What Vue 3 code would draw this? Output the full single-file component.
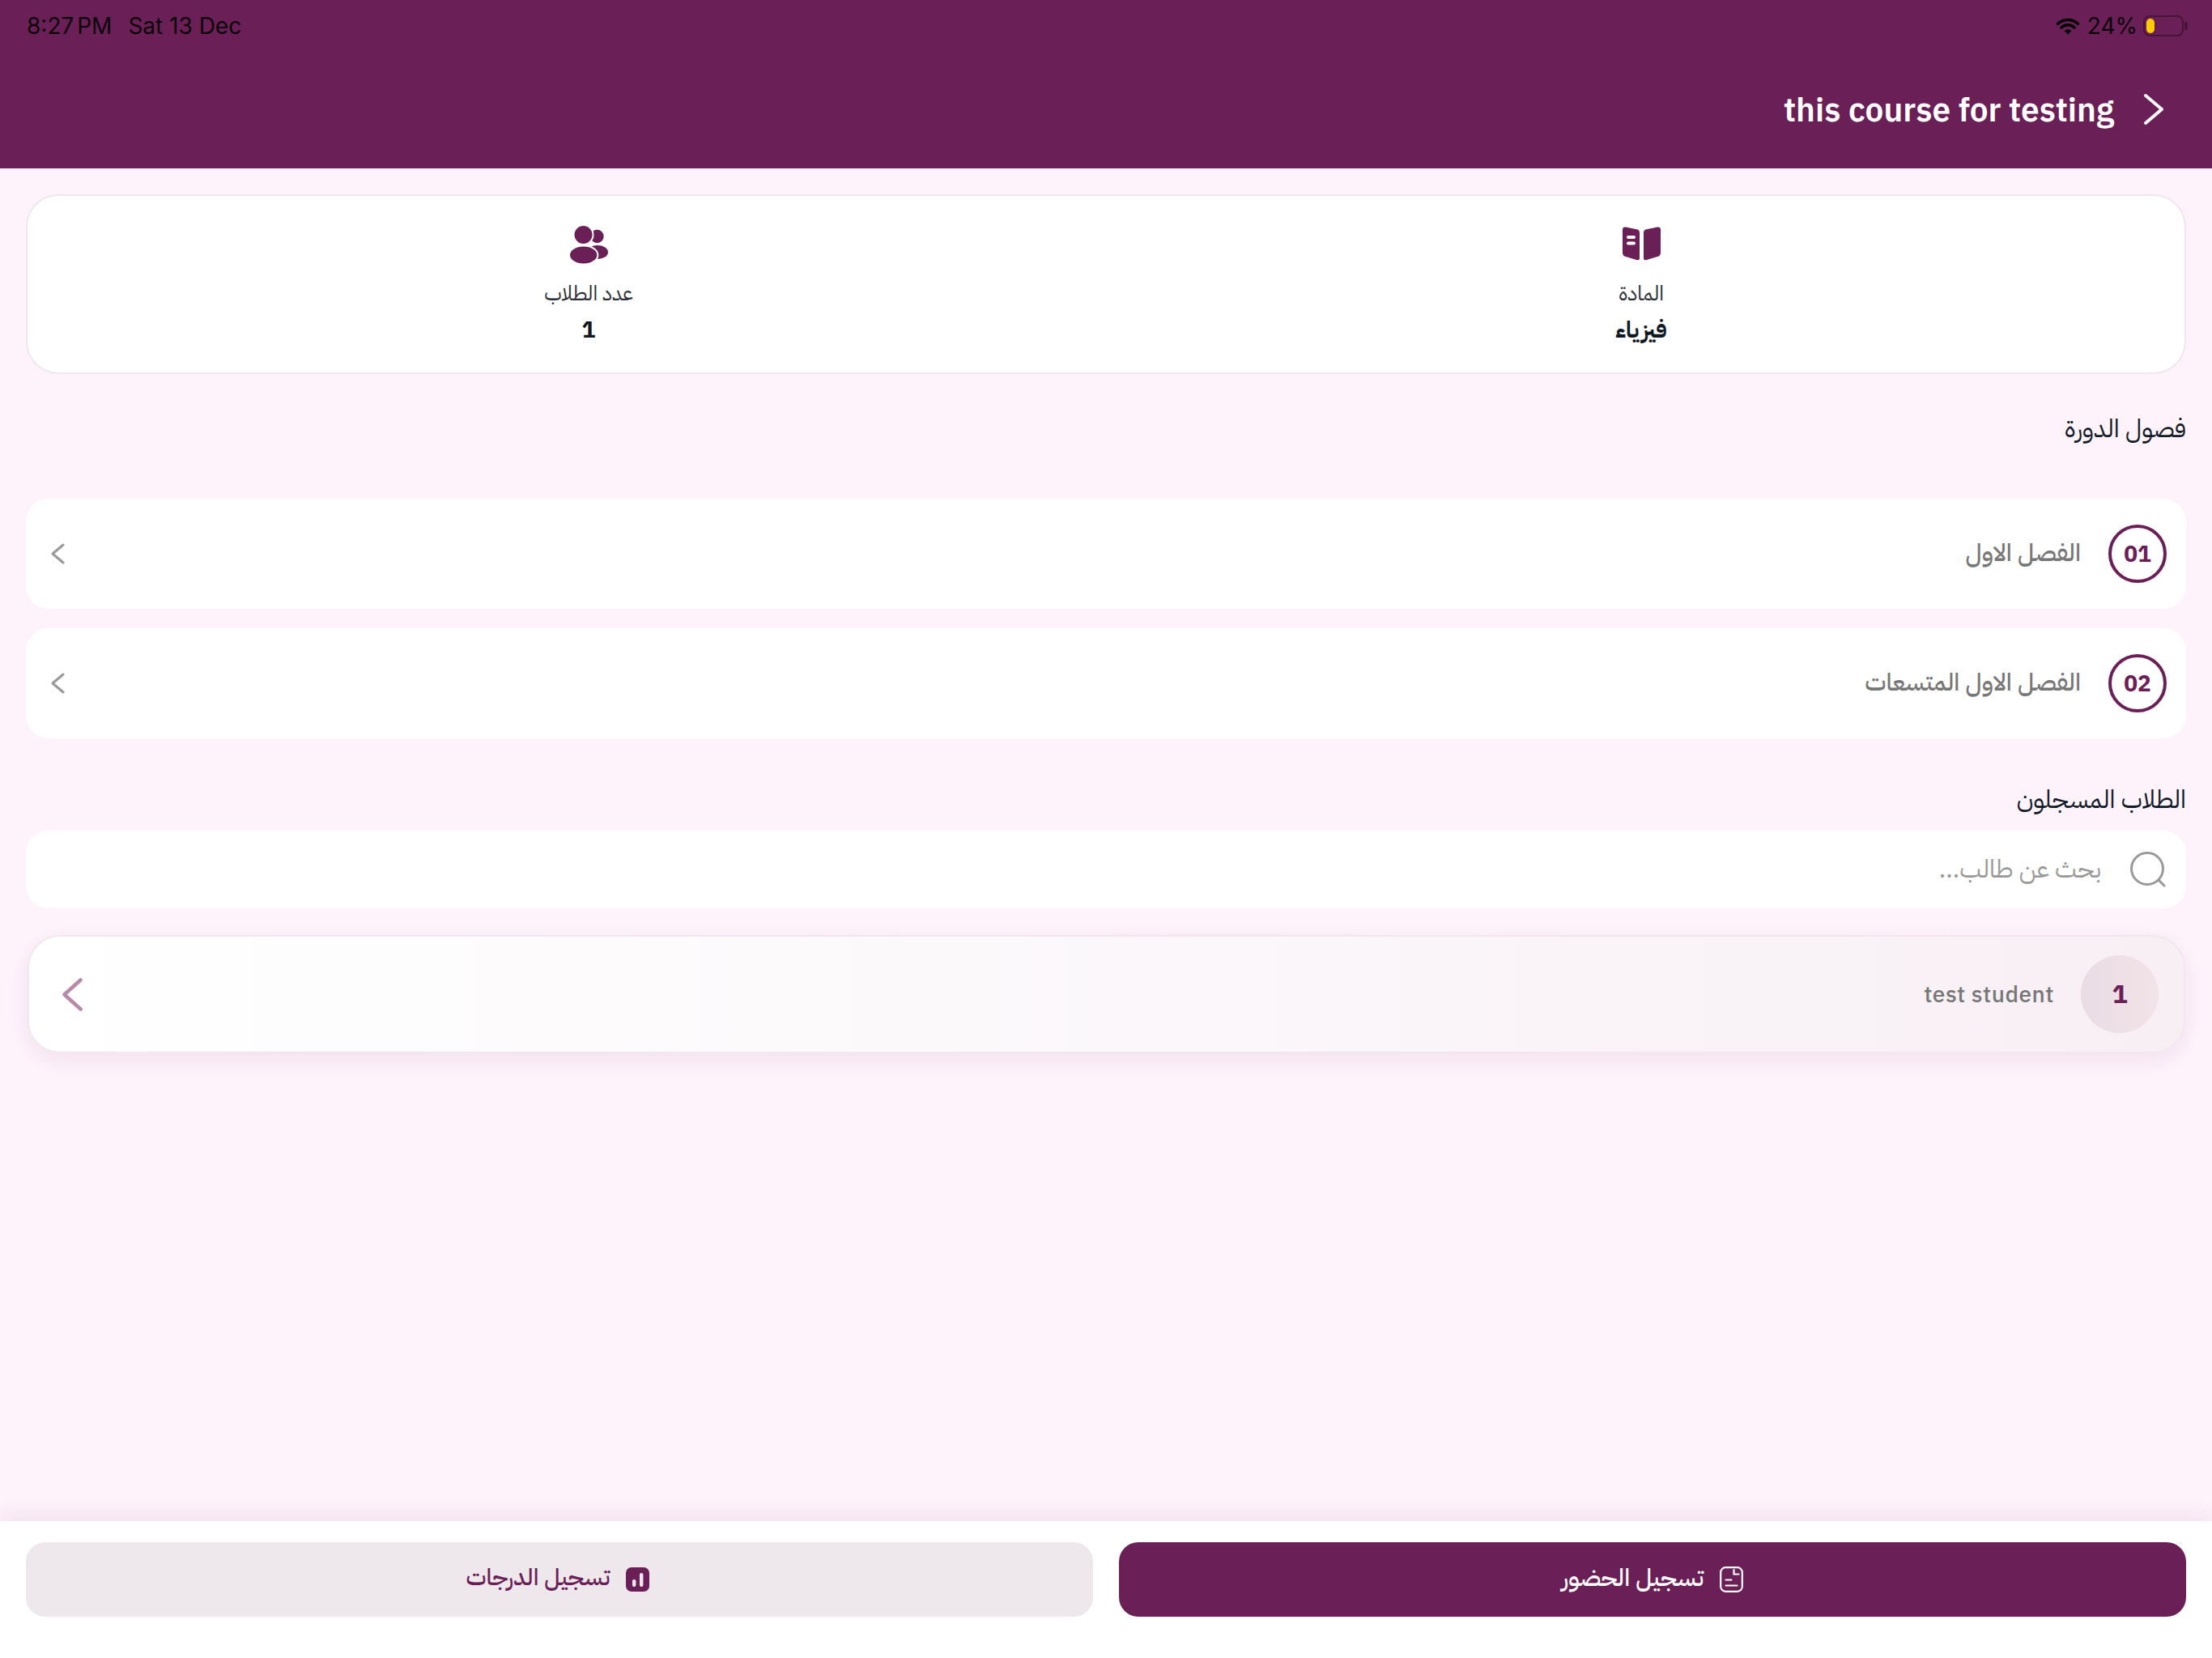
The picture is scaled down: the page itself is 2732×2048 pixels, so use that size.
<template>
  <div class="page">
    <header class="top">
      <div class="status" dir="ltr">
        <span class="time">8:27 PM</span>
        <span class="date">Sat 13 Dec</span>
        <span class="status-right">
          <svg class="wifi" width="28" height="21" viewBox="0 0 28 21">
            <path d="M1.5 7.5 A18 18 0 0 1 26.5 7.5" fill="none" stroke="#000" stroke-width="3.4" stroke-linecap="round" />
            <path d="M6 12 A11.5 11.5 0 0 1 22 12" fill="none" stroke="#000" stroke-width="3.4" stroke-linecap="round" />
            <path d="M14 20.5 L9.6 16 A6.2 6.2 0 0 1 18.4 16 Z" fill="#000" />
          </svg>
          <span>24%</span>
          <span class="battery"><span class="battery-fill"></span></span>
        </span>
      </div>
      <div class="title-row">
        <svg class="back" width="26" height="40" viewBox="0 0 26 40">
          <path d="M3 3 L23 20 L3 37" fill="none" stroke="#fff" stroke-width="4" stroke-linecap="round" stroke-linejoin="round" />
        </svg>
        <span class="title" dir="ltr">this course for testing</span>
      </div>
    </header>

    <main class="content">
      <section class="stats">
        <div class="stat">
          <svg width="47" height="47" viewBox="0 0 47 47" preserveAspectRatio="xMidYMin">
            <g transform="translate(0 1)">
              <path d="M4 .6 L18.5 3.6 Q21 4.2 21 7 V39 Q21 42 18 41.2 L4 37 Q0 35.8 0 32 V4 Q0 0 4 .6 Z" fill="#6a2056" />
              <path d="M43 .6 L28.5 3.6 Q26 4.2 26 7 V39 Q26 42 29 41.2 L43 37 Q47 35.8 47 32 V4 Q47 0 43 .6 Z" fill="#6a2056" />
              <rect x="5" y="11" width="11" height="4" rx="2" fill="#fff" />
              <rect x="5" y="18.5" width="11" height="4" rx="2" fill="#fff" />
            </g>
          </svg>
          <span class="stat-label">المادة</span>
          <span class="stat-value">فيزياء</span>
        </div>
        <div class="stat">
          <svg width="47" height="47" viewBox="0 0 47 47">
            <circle cx="33.5" cy="13" r="8.2" fill="#6a2056" />
            <ellipse cx="34" cy="32.5" rx="13" ry="8.5" fill="#6a2056" />
            <circle cx="16.5" cy="11" r="12" fill="#6a2056" stroke="#fff" stroke-width="2" />
            <ellipse cx="16.7" cy="36" rx="17.7" ry="11.5" fill="#6a2056" stroke="#fff" stroke-width="2" />
          </svg>
          <span class="stat-label">عدد الطلاب</span>
          <span class="stat-value">1</span>
        </div>
      </section>

      <h2 class="section-title first">فصول الدورة</h2>
      <div class="chapters">
        <div v-for="chapter in chapters" :key="chapter.num" class="chapter">
          <span class="chapter-num">{{ chapter.num }}</span>
          <span class="chapter-name">{{ chapter.name }}</span>
          <svg class="chapter-arrow" width="17" height="26" viewBox="0 0 17 26">
            <path d="M15 2 L2 13 L15 24" fill="none" stroke="#999" stroke-width="3" stroke-linecap="round" stroke-linejoin="round" />
          </svg>
        </div>
      </div>

      <h2 class="section-title second">الطلاب المسجلون</h2>
      <div class="search">
        <svg width="44" height="44" viewBox="0 0 44 44">
          <circle cx="21" cy="21" r="19.5" fill="none" stroke="#999" stroke-width="3" />
          <path d="M36 36 L42 42" fill="none" stroke="#999" stroke-width="3" stroke-linecap="round" />
        </svg>
        <input class="search-input" type="text" placeholder="بحث عن طالب..." />
      </div>

      <div class="student">
        <span class="avatar">1</span>
        <span class="student-name" dir="ltr">test student</span>
        <svg class="student-arrow" width="25" height="41" viewBox="0 0 25 41">
          <path d="M22.5 2.5 L2.5 20.5 L22.5 38.5" fill="none" stroke="#b88aaa" stroke-width="4.5" stroke-linecap="round" stroke-linejoin="round" />
        </svg>
      </div>
    </main>

    <footer class="bottom">
      <button class="action primary">
        <svg width="29" height="32" viewBox="0 0 29 32">
          <rect x="1.2" y="1.2" width="26.6" height="29.6" rx="6" fill="none" stroke="#fff" stroke-width="2.2" />
          <path d="M17.5 4 V9.5 H23.5 M7.5 16.5 H14.5 M7.5 23.5 H21.5" fill="none" stroke="#fff" stroke-width="2.2" stroke-linecap="round" />
        </svg>
        <span class="action-text">تسجيل الحضور</span>
      </button>
      <button class="action secondary">
        <svg width="29" height="30" viewBox="0 0 29 30">
          <rect width="29" height="30" rx="7" fill="#6a2056" />
          <rect x="8" y="15" width="4.4" height="9" rx="2" fill="#eee8ec" />
          <rect x="17" y="7" width="4.4" height="17" rx="2" fill="#eee8ec" />
        </svg>
        <span class="action-text">تسجيل الدرجات</span>
      </button>
    </footer>
  </div>
</template>

<script setup>
const chapters = [
  { num: '01', name: 'الفصل الاول' },
  { num: '02', name: 'الفصل الاول المتسعات' },
]
</script>

<style>
html,
body {
  margin: 0;
  background: #fef2fb;
}
</style>

<style scoped>
.page {
  direction: rtl;
  width: 2732px;
  min-height: 2048px;
  display: flex;
  flex-direction: column;
  background: #fef2fb;
  font-family: "IBM Plex Sans Arabic", "Noto Sans", "DejaVu Sans", sans-serif;
}

.top {
  height: 208px;
  box-sizing: border-box;
  background: #6a2056;
  display: flex;
  flex-direction: column;
}

.status {
  display: flex;
  align-items: center;
  height: 64px;
  padding: 0 35px 0 33px;
  font-family: Inter, "Liberation Sans", sans-serif;
  font-size: 28px;
  color: #0a0208;
}

.time {
  word-spacing: -4px;
}

.date {
  margin-left: 20px;
}

.status-right {
  margin-left: auto;
  display: flex;
  align-items: center;
  gap: 10px;
}

.battery {
  position: relative;
  width: 50px;
  height: 26px;
  margin-left: -3px;
  box-sizing: border-box;
  border: 2px solid rgba(0, 0, 0, 0.35);
  border-radius: 8px;
  padding: 2px;
  display: flex;
  justify-content: flex-start;
}

.battery::after {
  content: "";
  position: absolute;
  right: -7px;
  top: 6px;
  width: 4px;
  height: 10px;
  border-radius: 0 3px 3px 0;
  background: rgba(0, 0, 0, 0.35);
}

.battery-fill {
  width: 10px;
  height: 18px;
  border-radius: 5px;
  background: #ffcc00;
}

.title-row {
  display: flex;
  align-items: center;
  gap: 36px;
  padding: 44px 59px 0 0;
}

.title {
  font-family: "IBM Plex Sans", Roboto, sans-serif;
  font-size: 40.6px;
  font-weight: 600;
  color: #fff;
}

.content {
  flex: 1;
  padding: 32px;
  display: flex;
  flex-direction: column;
}

.stats {
  height: 222px;
  box-sizing: border-box;
  background: #fff;
  border: 2px solid #f0e7ee;
  border-radius: 40px;
  display: grid;
  grid-template-columns: 1300px 1300px;
  justify-content: center;
  padding: 37px 21px 0 43px;
}

.stat {
  display: flex;
  flex-direction: column;
  align-items: center;
}

.stat-label {
  margin-top: 20px;
  font-size: 25.5px;
  line-height: 34px;
  color: #2b2f38;
}

.stat-value {
  margin-top: 8px;
  font-size: 28px;
  line-height: 40px;
  font-weight: 700;
  color: #101822;
}

.section-title {
  margin: 0;
  font-size: 31px;
  line-height: 44px;
  font-weight: 400;
  color: #111a26;
}

.section-title.first {
  margin-top: 46px;
  margin-bottom: 64px;
}

.section-title.second {
  margin-top: 54px;
  margin-bottom: 16px;
}

.chapters {
  display: flex;
  flex-direction: column;
  gap: 24px;
}

.chapter {
  height: 136px;
  box-sizing: border-box;
  background: #fff;
  border-radius: 28px;
  display: flex;
  align-items: center;
  padding: 0 24px;
}

.chapter-num {
  width: 72px;
  height: 72px;
  box-sizing: border-box;
  border: 4px solid #6a2056;
  border-radius: 50%;
  padding-bottom: 2px;
  display: flex;
  align-items: center;
  justify-content: center;
  font-family: "IBM Plex Sans", "DejaVu Sans", sans-serif;
  font-size: 28px;
  font-weight: 700;
  color: #6a2056;
}

.chapter-name {
  margin-right: 34px;
  padding-bottom: 2px;
  font-size: 30.4px;
  font-weight: 500;
  color: #777;
}

.chapter-arrow {
  margin-right: auto;
  margin-left: 7px;
}

.search {
  height: 96px;
  box-sizing: border-box;
  background: #fff;
  border-radius: 28px;
  display: flex;
  align-items: center;
  gap: 36px;
  padding: 0 25px;
}

.search-input {
  flex: 1;
  border: none;
  outline: none;
  padding: 0 0 2px;
  background: transparent;
  font-family: inherit;
  font-size: 31px;
  color: #999;
  direction: rtl;
}

.search-input::placeholder {
  color: #999;
  opacity: 1;
}

.student {
  margin: 33px 1px 0 2px;
  height: 146px;
  box-sizing: border-box;
  border: 2px solid #f1e8ef;
  border-radius: 40px;
  background: linear-gradient(270deg, #f8eff5 0%, #fbf7fa 45%, #ffffff 100%);
  box-shadow: 0 8px 24px rgba(106, 32, 86, 0.08);
  display: flex;
  align-items: center;
  padding: 0 31px 0 41px;
}

.avatar {
  width: 96px;
  height: 96px;
  box-sizing: border-box;
  padding-bottom: 2px;
  border-radius: 50%;
  background: linear-gradient(90deg, #e9dce4, #f3e3e8);
  display: flex;
  align-items: center;
  justify-content: center;
  font-family: "IBM Plex Sans", "DejaVu Sans", sans-serif;
  font-size: 32px;
  font-weight: 700;
  color: #6a2056;
}

.student-name {
  margin-right: 33px;
  padding-bottom: 2px;
  font-family: "IBM Plex Sans", Roboto, sans-serif;
  font-size: 28px;
  font-weight: 500;
  letter-spacing: 0.5px;
  color: #777;
}

.student-arrow {
  margin-right: auto;
}

.bottom {
  height: 169px;
  box-sizing: border-box;
  background: #fff;
  box-shadow: 0 -8px 24px rgba(106, 32, 86, 0.08);
  display: flex;
  gap: 32px;
  padding: 26px 32px 0;
}

.action {
  flex: 1;
  height: 92px;
  border: none;
  border-radius: 24px;
  display: flex;
  align-items: center;
  justify-content: center;
  gap: 20px;
  padding: 0 8px;
  font-family: inherit;
  font-weight: 500;
  direction: rtl;
}

.action-text {
  padding-bottom: 5px;
}

.action.primary {
  background: #6a2056;
  color: #fff;
  font-size: 30px;
}

.action.secondary {
  background: #eee8ec;
  color: #6a2056;
  font-size: 29px;
  padding: 0 10px 0 6px;
}
</style>
